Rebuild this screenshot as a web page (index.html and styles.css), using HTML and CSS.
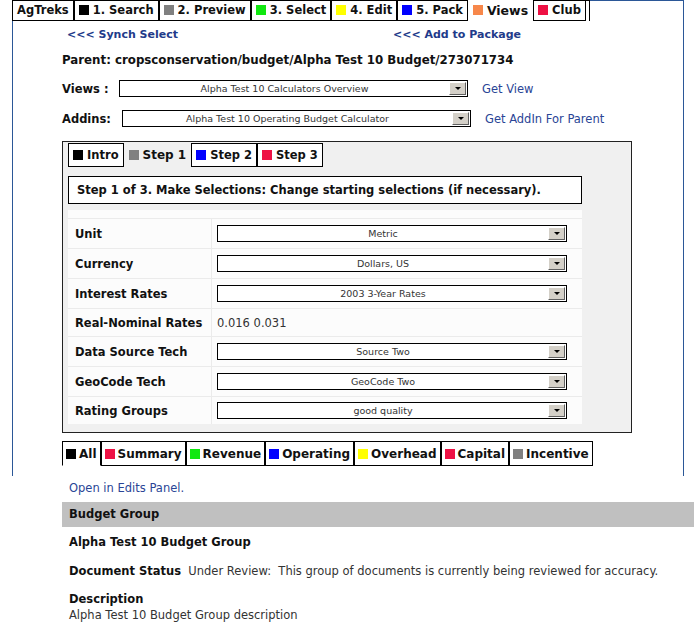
FILE: index.html
```html
<!DOCTYPE html>
<html>
<head>
<meta charset="utf-8">
<link rel="stylesheet" href="styles.css">
</head>
<body>
<div class="panel">
  <div class="toptabs">
    <div class="tab">AgTreks</div>
    <div class="tab"><i class="sq k"></i>1. Search</div>
    <div class="tab"><i class="sq g"></i>2. Preview</div>
    <div class="tab"><i class="sq gr"></i>3. Select</div>
    <div class="tab"><i class="sq y"></i>4. Edit</div>
    <div class="tab"><i class="sq b"></i>5. Pack</div>
    <div class="tab on"><i class="sq o"></i>Views</div>
    <div class="tab"><i class="sq r"></i>Club</div>
    <div class="tab-end"></div>
  </div>
  <div class="content">
    <div class="links">
      <a class="lnk strong">&lt;&lt;&lt; Synch Select</a>
      <a class="lnk strong">&lt;&lt;&lt; Add to Package</a>
    </div>
    <div class="parent">Parent: cropsconservation/budget/Alpha Test 10 Budget/273071734</div>
    <div class="frow">
      <span class="flabel lv">Views :</span>
      <div class="sel sel-top"><span class="val">Alpha Test 10 Calculators Overview</span><span class="btn"></span></div>
      <a class="lnk">Get View</a>
    </div>
    <div class="frow frow2">
      <span class="flabel la">Addins:</span>
      <div class="sel sel-top"><span class="val">Alpha Test 10 Operating Budget Calculator</span><span class="btn"></span></div>
      <a class="lnk">Get AddIn For Parent</a>
    </div>
    <div class="calc">
      <div class="steptabs">
        <div class="stab"><i class="sq k"></i>Intro</div>
        <div class="stab on"><i class="sq g"></i>Step 1</div>
        <div class="stab"><i class="sq b"></i>Step 2</div>
        <div class="stab"><i class="sq r"></i>Step 3</div>
      </div>
      <div class="stephead">Step 1 of 3. Make Selections: Change starting selections (if necessary).</div>
      <div class="grid">
        <div class="row"><div class="lab">Unit</div><div class="cell"><div class="sel sel-grid"><span class="val">Metric</span><span class="btn"></span></div></div></div>
        <div class="row"><div class="lab">Currency</div><div class="cell"><div class="sel sel-grid"><span class="val">Dollars, US</span><span class="btn"></span></div></div></div>
        <div class="row"><div class="lab">Interest Rates</div><div class="cell"><div class="sel sel-grid"><span class="val">2003 3-Year Rates</span><span class="btn"></span></div></div></div>
        <div class="row short"><div class="lab">Real-Nominal Rates</div><div class="cell txt">0.016 0.031</div></div>
        <div class="row"><div class="lab">Data Source Tech</div><div class="cell"><div class="sel sel-grid"><span class="val">Source Two</span><span class="btn"></span></div></div></div>
        <div class="row"><div class="lab">GeoCode Tech</div><div class="cell"><div class="sel sel-grid"><span class="val">GeoCode Two</span><span class="btn"></span></div></div></div>
        <div class="row short"><div class="lab">Rating Groups</div><div class="cell"><div class="sel sel-grid"><span class="val">good quality</span><span class="btn"></span></div></div></div>
      </div>
    </div>
    <div class="bottabs">
      <div class="btab on"><i class="sq k"></i>All</div>
      <div class="btab"><i class="sq r"></i>Summary</div>
      <div class="btab"><i class="sq gr"></i>Revenue</div>
      <div class="btab"><i class="sq b"></i>Operating</div>
      <div class="btab"><i class="sq y"></i>Overhead</div>
      <div class="btab"><i class="sq r"></i>Capital</div>
      <div class="btab"><i class="sq g"></i>Incentive</div>
    </div>
  </div>
</div>
<div class="lower">
  <a class="lnk edits">Open in Edits Panel.</a>
  <div class="bar">Budget Group</div>
  <div class="gname">Alpha Test 10 Budget Group</div>
  <div class="status"><b>Document Status</b>&nbsp; Under Review:&nbsp; This group of documents is currently being reviewed for accuracy.</div>
  <div class="desc"><b>Description</b><br>Alpha Test 10 Budget Group description</div>
</div>
</body>
</html>
```
FILE: styles.css
```css
html, body {
  margin: 0;
  padding: 0;
  background: #fff;
  overflow-x: hidden;
}
body {
  font-family: "DejaVu Sans", Verdana, sans-serif;
  font-size: 11.5px;
  color: #222;
}
.panel {
  margin-left: 12px;
  width: 672px;
  box-sizing: border-box;
  border: 1px solid #2b5797;
  border-bottom: none;
  padding-bottom: 10px;
}
.toptabs {
  display: flex;
  margin: -1px 0 0 -1px;
  height: 21px;
}
.tab {
  display: flex;
  align-items: center;
  gap: 4px;
  height: 21px;
  box-sizing: border-box;
  padding: 0 4px 1px;
  border: 1px solid #000;
  background: #fff;
  font-weight: bold;
  color: #111;
}
.tab.on {
  border-color: #fff;
  font-size: 12.5px;
}
.tab-end {
  width: 4px;
  height: 21px;
  box-sizing: border-box;
  border-right: 1px solid #000;
  border-top: 1px solid #000;
  background: #fff;
}
.sq {
  display: inline-block;
  width: 10px;
  height: 10px;
  flex: none;
}
.sq.k { background: #000; }
.sq.g { background: #808080; }
.sq.gr { background: #10e810; }
.sq.y { background: #ffff00; }
.sq.b { background: #0000ff; }
.sq.o { background: #f7874a; }
.sq.r { background: #ee1144; }

.content {
  padding-left: 49px;
}
.lnk {
  color: #2a4596;
  text-decoration: none;
}
.lnk.strong { font-weight: bold; color: #223a8a; font-size: 11px; }
.links {
  display: grid;
  grid-template-columns: 326px auto;
  padding-left: 5px;
  margin-top: 6px;
  line-height: 16px;
}
.parent {
  margin-top: 9px;
  line-height: 16px;
  font-weight: bold;
  font-size: 11.8px;
  color: #111;
}
.frow {
  display: flex;
  align-items: center;
  margin-top: 12px;
  height: 17px;
}
.frow2 { margin-top: 13px; }
.flabel {
  font-weight: bold;
  color: #111;
}
.flabel.lv { width: 57px; }
.flabel.la { width: 60px; }
.frow .lnk { margin-left: 14px; }

.sel {
  display: flex;
  align-items: center;
  height: 17px;
  box-sizing: border-box;
  border: 1px solid #000;
  background: #fff;
  font-size: 9.5px;
  color: #333;
}
.sel-top { width: 349px; }
.sel-grid { width: 350px; }
.sel .val {
  flex: 1;
  text-align: center;
  white-space: nowrap;
  overflow: hidden;
}
.sel .btn {
  position: relative;
  width: 17px;
  height: 13px;
  margin-right: 1px;
  box-sizing: border-box;
  background: #d4d0c8;
  border: 1px solid;
  border-color: #fff #606060 #606060 #fff;
}
.sel .btn::after {
  content: "";
  position: absolute;
  left: 5px;
  top: 4px;
  border-left: 3px solid transparent;
  border-right: 3px solid transparent;
  border-top: 3px solid #000;
}

.calc {
  margin-top: 14px;
  width: 570px;
  height: 292px;
  box-sizing: border-box;
  border: 1px solid #222;
  background: #f0f0f0;
  padding: 1px 0 0 5px;
}
.steptabs {
  display: flex;
  height: 24px;
}
.stab {
  display: flex;
  align-items: center;
  gap: 4px;
  box-sizing: border-box;
  height: 24px;
  padding: 0 4px;
  border: 1px solid #000;
  background: #fff;
  font-weight: bold;
  color: #111;
}
.stab.on {
  border-color: transparent;
  background: #f0f0f0;
  font-size: 12px;
}
.stephead {
  margin-top: 9px;
  width: 514px;
  height: 28px;
  box-sizing: border-box;
  border: 1px solid #000;
  background: #fff;
  display: flex;
  align-items: center;
  padding-left: 8px;
  font-weight: bold;
  color: #111;
}
.grid {
  margin-top: 6px;
  width: 514px;
  background: #fcfcfc;
  padding-top: 8px;
}
.row {
  display: flex;
  height: 30px;
  box-sizing: border-box;
  border-top: 1px solid #ebebeb;
}
.row.short { height: 28px; }
.lab {
  width: 144px;
  box-sizing: border-box;
  border-right: 1px solid #ebebeb;
  padding-left: 7px;
  display: flex;
  align-items: center;
  font-weight: bold;
  color: #111;
}
.cell {
  display: flex;
  align-items: center;
  padding-left: 5px;
}
.cell.txt { color: #333; }

.bottabs {
  display: flex;
  margin-top: 8px;
  height: 25px;
}
.btab {
  display: flex;
  align-items: center;
  gap: 3px;
  box-sizing: border-box;
  height: 25px;
  padding: 0 3px;
  border: 1px solid #000;
  background: #fff;
  font-weight: bold;
  font-size: 12px;
  color: #111;
}
.btab.on {
  border-bottom-color: #fff;
}

.lower {
  margin-left: 62px;
}
.edits {
  display: block;
  padding-left: 7px;
  margin-top: 4px;
  line-height: 16px;
}
.bar {
  margin-top: 6px;
  height: 25px;
  line-height: 25px;
  background: #c0c0c0;
  padding-left: 7px;
  font-weight: bold;
  color: #111;
}
.gname {
  padding-left: 7px;
  margin-top: 7px;
  line-height: 16px;
  font-weight: bold;
  color: #111;
}
.status {
  padding-left: 7px;
  margin-top: 13px;
  line-height: 16px;
  color: #333;
}
.status b, .desc b { color: #111; }
.desc {
  padding-left: 7px;
  margin-top: 12px;
  line-height: 16px;
  color: #333;
}
```
